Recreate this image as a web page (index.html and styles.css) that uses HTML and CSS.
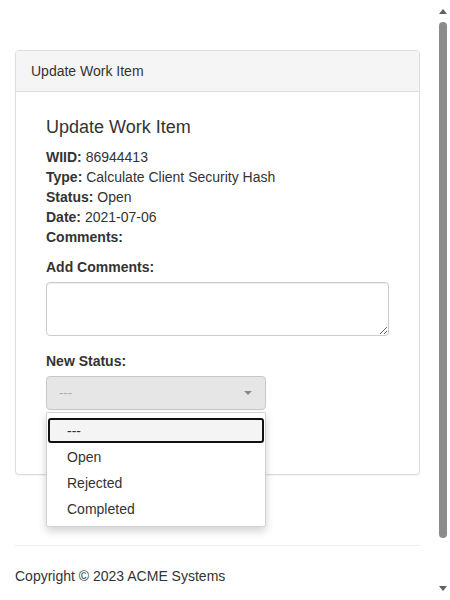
FILE: index.html
```html
<!DOCTYPE html>
<html>
<head>
<meta charset="utf-8">
<link rel="stylesheet" href="styles.css">
</head>
<body>
<div class="page">
  <div class="panel">
    <div class="panel-heading">Update Work Item</div>
    <div class="panel-body">
      <div class="col">
        <h4>Update Work Item</h4>
        <div class="info">
          <div><b>WIID:</b> 86944413</div>
          <div><b>Type:</b> Calculate Client Security Hash</div>
          <div><b>Status:</b> Open</div>
          <div><b>Date:</b> 2021-07-06</div>
          <div><b>Comments:</b></div>
        </div>
        <div class="form-group">
          <label>Add Comments:</label>
          <textarea class="form-control" rows="2"></textarea>
        </div>
        <div class="form-group status-group">
          <label>New Status:</label>
          <div class="select-wrap">
            <div class="select"><span class="placeholder">---</span><span class="caret"></span></div>
            <div class="dropdown">
              <div class="option selected">---</div>
              <div class="option">Open</div>
              <div class="option">Rejected</div>
              <div class="option">Completed</div>
            </div>
          </div>
        </div>
      </div>
    </div>
  </div>
  <footer class="footer">
    <hr>
    <p>Copyright © 2023 ACME Systems</p>
  </footer>
</div>
<div class="scrollbar">
  <span class="arrow-up"></span>
  <span class="thumb"></span>
  <span class="arrow-down"></span>
</div>
</body>
</html>
```
FILE: styles.css
```css
html, body {
  margin: 0;
  height: 600px;
  overflow: hidden;
}
body {
  display: flex;
  font-family: "Liberation Sans", Arial, sans-serif;
  font-size: 14px;
  line-height: 20px;
  color: #333;
  background: #fff;
}
.page {
  flex: 1;
  padding: 50px 15px 0;
  min-width: 0;
}
.panel {
  border: 1px solid #ddd;
  border-radius: 4px;
  box-shadow: 0 1px 1px rgba(0,0,0,.05);
  background: #fff;
}
.panel-heading {
  background: #f5f5f5;
  border-bottom: 1px solid #ddd;
  padding: 10px 15px;
  border-radius: 3px 3px 0 0;
}
.panel-body {
  padding: 15px;
}
.col {
  padding: 0 15px;
}
h4 {
  font-size: 18px;
  font-weight: normal;
  line-height: 20px;
  margin: 10px 0;
}
.info {
  margin-bottom: 10px;
}
label {
  display: block;
  font-weight: bold;
  margin-bottom: 5px;
}
.form-group {
  margin-bottom: 15px;
}
.form-control {
  display: block;
  box-sizing: border-box;
  width: 100%;
  height: 54px;
  border: 1px solid #ccc;
  border-radius: 4px;
  box-shadow: inset 0 1px 1px rgba(0,0,0,.075);
  font: inherit;
  padding: 6px 12px;
  margin: 0;
}
.status-group {
  margin-bottom: 49px;
}
.select-wrap {
  position: relative;
  width: 220px;
}
.select {
  box-sizing: border-box;
  height: 34px;
  border: 1px solid #c8c8c8;
  border-radius: 4px;
  background: #e6e6e6;
  display: flex;
  align-items: center;
  justify-content: space-between;
  padding: 0 13px 0 12px;
}
.placeholder {
  color: #aaa;
  font-size: 13px;
}
.caret {
  width: 0;
  height: 0;
  border-left: 4px solid transparent;
  border-right: 4px solid transparent;
  border-top: 4px solid #888;
}
.dropdown {
  position: absolute;
  top: 36px;
  left: 0;
  width: 220px;
  box-sizing: border-box;
  background: #fff;
  border: 1px solid #d4d4d4;
  border-radius: 2px;
  box-shadow: 0 4px 8px rgba(0,0,0,.18);
  padding: 5px 1px 4px;
  z-index: 2;
}
.option {
  height: 26px;
  line-height: 26px;
  padding-left: 19px;
  box-sizing: border-box;
}
.option.selected {
  border: 2px solid #111;
  border-radius: 3px;
  background: #f4f4f4;
  line-height: 22px;
  padding-left: 17px;
  height: 25px;
  margin-bottom: 1px;
}
.footer hr {
  border: 0;
  border-top: 1px solid #eee;
  margin: 70px 0 20px;
}
.footer p {
  margin: 0;
}
.scrollbar {
  width: 15px;
  flex: none;
  display: flex;
  flex-direction: column;
  align-items: center;
  background: #fff;
}
.arrow-up {
  margin-top: 9px;
  width: 0;
  height: 0;
  border-left: 4px solid transparent;
  border-right: 4px solid transparent;
  border-bottom: 5px solid #606060;
}
.thumb {
  margin-top: 8px;
  width: 8px;
  height: 516px;
  border-radius: 4px;
  background: #8b8b8b;
}
.arrow-down {
  margin-top: auto;
  margin-bottom: 9px;
  width: 0;
  height: 0;
  border-left: 4px solid transparent;
  border-right: 4px solid transparent;
  border-top: 5px solid #606060;
}
```
